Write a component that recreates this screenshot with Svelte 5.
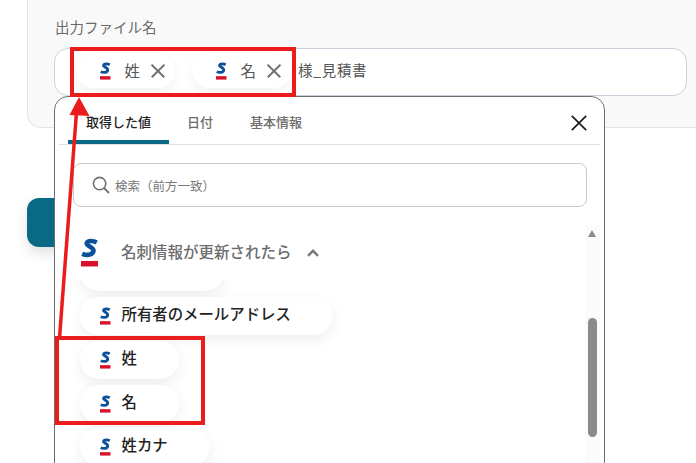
<script lang="ts">
	const listItems = ['所有者のメールアドレス', '姓', '名', '姓カナ'];
	const tabs = ['取得した値', '日付', '基本情報'];
</script>

{#snippet logo(cls)}
	<svg class={cls} viewBox="0 0 20 36" aria-hidden="true">
		<path
			d="M18.5 5.2 C14.5 3 8 2.6 6.8 6 C5.6 9.8 16 10.4 14.6 15.8 C13.4 20.6 6 20.6 1.4 18.6"
			fill="none"
			stroke="#0b5199"
			stroke-width="5.4"
		/>
		<rect x="0" y="27" width="20" height="6.5" fill="#d9102a" />
	</svg>
{/snippet}

<div class="page">
	<section class="card">
		<div class="field-label">出力ファイル名</div>
		<div class="field">
			<span class="token">{@render logo('logo-sm')}<span class="token__text">姓</span><span class="token__x"></span></span>
			<span class="token">{@render logo('logo-sm')}<span class="token__text">名</span><span class="token__x"></span></span>
			<span class="field__rest">様_見積書</span>
		</div>
	</section>

	<div class="submit"></div>

	<div class="popup">
		<div class="tabs">
			{#each tabs as tab, i}
				<div class="tab" class:tab--active={i === 0}>{tab}</div>
			{/each}
			<svg class="close" viewBox="0 0 16 16" aria-hidden="true">
				<path d="M0.8 0.8 L15.2 15.2 M15.2 0.8 L0.8 15.2" stroke="#1c1c1c" stroke-width="1.7" />
			</svg>
		</div>

		<div class="search">
			<svg class="search__icon" viewBox="0 0 18 18" aria-hidden="true">
				<circle cx="7.6" cy="7.6" r="6.2" fill="none" stroke="#6f6f6f" stroke-width="1.6" />
				<path d="M12 12 L17 17" stroke="#6f6f6f" stroke-width="1.8" />
			</svg>
			<span>検索（前方一致）</span>
		</div>

		<div class="body">
			<div class="section">
				{@render logo('logo-lg')}
				<span class="section__title">名刺情報が更新されたら</span>
				<svg class="chevron" viewBox="0 0 12 8" aria-hidden="true">
					<path d="M1 6.8 L6 1.8 L11 6.8" fill="none" stroke="#777" stroke-width="2.4" />
				</svg>
			</div>
			<div class="list">
				<div class="item item--cut"></div>
				{#each listItems as item}
					<div class="item">{@render logo('logo-sm')}<span>{item}</span></div>
				{/each}
			</div>
			<div class="scrollbar">
				<span class="scrollbar__arrow"></span>
				<span class="scrollbar__thumb"></span>
			</div>
		</div>
	</div>

	<div class="mark mark--top"></div>
	<div class="mark mark--list"></div>
	<svg class="arrow" viewBox="0 0 696 463" aria-hidden="true">
		<path d="M59.5 338 L76.5 112" stroke="#eb1c1c" stroke-width="3.5" fill="none" />
		<path d="M79 97 L89.5 116 L69.5 115 Z" fill="#eb1c1c" />
	</svg>
</div>

<style>
	:global(body) {
		margin: 0;
		background: #fff;
	}

	.page {
		position: relative;
		width: 696px;
		height: 463px;
		overflow: hidden;
		font-family: 'Noto Sans CJK JP', 'Noto Sans', sans-serif;
		color: #333;
	}

	.card {
		box-sizing: border-box;
		width: 720px;
		height: 128px;
		margin-left: 27px;
		padding: 17px 0 0 26px;
		background: #f9f9fa;
		border: 1px solid #e4e4e7;
		border-top: 0;
		border-radius: 0 0 14px 14px;
	}

	.field-label {
		height: 31px;
		padding-left: 1px;
		font-size: 14.5px;
		line-height: 20px;
		color: #6b6b6b;
	}

	.field {
		box-sizing: border-box;
		display: flex;
		align-items: center;
		gap: 17px;
		width: 633px;
		height: 48px;
		padding: 0 0 2px 21px;
		background: #fff;
		border: 1px solid #cfd2de;
		border-radius: 14px;
	}

	.token {
		display: flex;
		align-items: center;
		box-sizing: border-box;
		width: 99px;
		height: 34px;
		padding-left: 24px;
		background: #fff;
		border-radius: 17px;
		box-shadow: 0 4px 12px rgba(0, 0, 0, 0.06);
	}

	.token__text {
		margin: -2px 0 0 14px;
		font-size: 15.5px;
		color: #555;
	}

	.token__x {
		position: relative;
		width: 14px;
		height: 14px;
		margin-left: 11px;
	}

	.token__x::before,
	.token__x::after {
		content: '';
		position: absolute;
		left: -2px;
		top: 6px;
		width: 18px;
		height: 1.7px;
		background: #707070;
		transform: rotate(45deg);
	}

	.token__x::after {
		transform: rotate(-45deg);
	}

	.field__rest {
		margin: -3px 0 0 -10px;
		font-size: 14.5px;
		letter-spacing: 0.6px;
		color: #555;
	}

	.logo-sm,
	.logo-lg {
		display: block;
		flex: none;
	}

	.logo-sm {
		width: 10.5px;
		height: 18.9px;
	}

	.logo-lg {
		width: 17px;
		height: 30.6px;
	}

	.submit {
		width: 120px;
		height: 49px;
		margin: 70px 0 0 27px;
		background: #0a6a85;
		border-radius: 12px;
		box-shadow: 0 6px 14px rgba(0, 0, 0, 0.12);
	}

	.popup {
		position: absolute;
		left: 54px;
		top: 96px;
		z-index: 0;
		box-sizing: border-box;
		width: 551px;
		height: 400px;
		background: #fff;
		border: 1px solid #6e6e6e;
		border-radius: 14px;
	}

	.tabs {
		position: relative;
		display: flex;
		height: 47px;
		margin: 0 4px;
		border-bottom: 1px solid #e2e2e4;
	}

	.tab {
		box-sizing: border-box;
		height: 47px;
		padding: 15px 18px 0;
		font-size: 13px;
		line-height: 20px;
		font-weight: 500;
		color: #6d6d6d;
	}

	.tab:nth-child(2) {
		padding-right: 19px;
	}

	.tab--active {
		width: 101px;
		margin-left: 9px;
		color: #222;
		border-bottom: 4px solid #0a6a85;
		border-radius: 4px 4px 0 0;
	}

	.close {
		position: absolute;
		right: 13px;
		top: 18px;
		width: 16px;
		height: 16px;
	}

	.search {
		box-sizing: border-box;
		display: flex;
		align-items: center;
		gap: 5px;
		width: 514px;
		height: 44px;
		margin: 18px 0 0 18px;
		padding: 0 0 0 18px;
		border: 1px solid #c8c8ca;
		border-radius: 8px;
		font-size: 12.5px;
		color: #777;
	}

	.search__icon {
		width: 18px;
		height: 18px;
	}

	.body {
		position: relative;
		height: 240px;
		margin-top: 18px;
	}

	.section {
		display: flex;
		align-items: flex-start;
		height: 55px;
		padding: 13px 0 0 26px;
		box-sizing: border-box;
		position: relative;
		z-index: 1;
		background: #fff;
	}

	.section__title {
		margin: 3px 0 0 23px;
		font-size: 15.5px;
		line-height: 21px;
		font-weight: 500;
		color: #6d6d6d;
	}

	.chevron {
		width: 12px;
		height: 8px;
		margin: 11px 0 0 15px;
	}

	.list {
		display: flex;
		flex-direction: column;
		align-items: flex-start;
		gap: 6px;
		padding-left: 25px;
	}

	.item {
		box-sizing: border-box;
		display: flex;
		align-items: center;
		gap: 11px;
		height: 38px;
		padding: 0 42px 6px 20px;
		background: #fff;
		border-radius: 19px;
		box-shadow: 0 5px 14px rgba(0, 0, 0, 0.07);
		font-size: 15.4px;
		font-weight: 500;
		color: #222;
	}

	.item :global(svg) {
		margin-top: 6px;
	}

	.item--cut {
		width: 144px;
		margin-top: -27px;
		padding: 0;
	}

	.item:last-child {
		margin-top: -1px;
	}

	.scrollbar {
		position: absolute;
		right: 4px;
		top: 0;
		bottom: 0;
		width: 15px;
		background: #fbfbfb;
		z-index: 1;
	}

	.scrollbar__arrow {
		position: absolute;
		left: 3px;
		top: 5px;
		border: 4.5px solid transparent;
		border-top: 0;
		border-bottom: 7px solid #8b8b8b;
	}

	.scrollbar__thumb {
		position: absolute;
		left: 3px;
		top: 93px;
		width: 9px;
		height: 119px;
		background: #8b8b8b;
		border-radius: 5px;
	}

	.mark {
		position: absolute;
		box-sizing: border-box;
		border: 4px solid #eb1c1c;
	}

	.mark--top {
		left: 70px;
		top: 47px;
		width: 226px;
		height: 50px;
	}

	.mark--list {
		left: 55px;
		top: 336px;
		width: 150px;
		height: 89px;
	}

	.arrow {
		position: absolute;
		inset: 0;
		width: 696px;
		height: 463px;
		pointer-events: none;
	}
</style>
